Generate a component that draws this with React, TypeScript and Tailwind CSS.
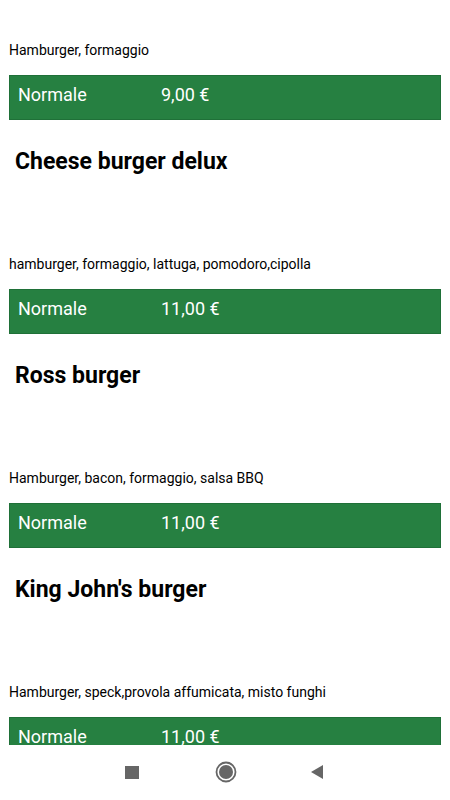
const items = [
  { title: '', desc: 'Hamburger, formaggio', price: '9,00 €' },
  { title: 'Cheese burger delux', desc: 'hamburger, formaggio, lattuga, pomodoro,cipolla', price: '11,00 €' },
  { title: 'Ross burger', desc: 'Hamburger, bacon, formaggio, salsa BBQ', price: '11,00 €' },
  { title: "King John's burger", desc: 'Hamburger, speck,provola affumicata, misto funghi', price: '11,00 €' },
]

function Item({ title, desc, price }: { title: string; desc: string; price: string }) {
  return (
    <div>
      {title && (
        <div className="mt-[28px] mb-[79px] pl-[15px] text-[23px] leading-[28px] font-bold text-black">{title}</div>
      )}
      <div className="pl-[9px] text-[14px] leading-[18px] text-black">{desc}</div>
      <div className="mx-[9px] mt-[16px] h-[45px] pb-[6px] flex items-center bg-[#268041] border border-[#1f7038] text-white text-[18px]">
        <span className="w-[151px] pl-[8px]">Normale</span>
        <span>{price}</span>
      </div>
    </div>
  )
}

export default function App() {
  return (
    <div className="h-[800px] w-[450px] flex flex-col bg-white" style={{ fontFamily: 'Roboto, sans-serif' }}>
      <div className="flex-1 overflow-hidden pt-[41px]">
        {items.map((it, i) => (
          <Item key={i} {...it} />
        ))}
      </div>
      <div className="h-[55px] flex items-center pb-[1px]">
        <div className="ml-[125px] w-[14px] h-[13px] bg-[#666]" />
        <svg className="ml-[76px]" width="22" height="22" viewBox="0 0 22 22">
          <circle cx="11" cy="11" r="9.5" fill="none" stroke="#666" strokeWidth="1.8" />
          <circle cx="11" cy="11" r="7" fill="#666" />
        </svg>
        <svg className="ml-[74px]" width="13" height="14" viewBox="0 0 13 14">
          <polygon points="12,0 12,14 0,7" fill="#666" />
        </svg>
      </div>
    </div>
  )
}
